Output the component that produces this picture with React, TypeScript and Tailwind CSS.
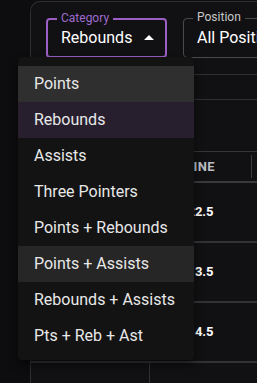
import React from "react";

const categories = [
  "Points",
  "Rebounds",
  "Assists",
  "Three Pointers",
  "Points + Rebounds",
  "Points + Assists",
  "Rebounds + Assists",
  "Pts + Reb + Ast",
];

const lines = ["22.5", "13.5", "14.5"];

function ArrowUp() {
  return (
    <svg viewBox="0 0 24 24" className="w-6 h-6 fill-white">
      <path d="m7 14 5-5 5 5z" />
    </svg>
  );
}

export default function App() {
  return (
    <div
      className="relative w-[257px] h-[383px] overflow-hidden bg-[#0d0d0f] text-white"
      style={{ fontFamily: "Roboto, 'Noto Sans', sans-serif" }}
    >
      {/* card */}
      <div className="ml-[30px] mt-[1px] w-[420px] h-[420px] border-l border-t border-[#2e2e31] rounded-tl-[10px] bg-[#111113]">
        {/* filters */}
        <div className="flex gap-4 pl-[15px] pt-[16px]">
          <div className="relative w-[121px] h-[40px] rounded-[4px] border-2 border-[#9c5fc4] flex items-center pl-[13px] pr-2">
            <span className="absolute -top-[9px] left-[9px] px-[4px] bg-[#111113] text-[12px] leading-[14px] text-[#9f6bcf]">
              Category
            </span>
            <span className="text-[16px]">Rebounds</span>
            <span className="ml-[5px] -mr-1">
              <ArrowUp />
            </span>
          </div>
          <div className="relative w-[160px] h-[40px] rounded-[4px] border border-[#4a4a4d] flex items-center pl-[13px]">
            <span className="absolute -top-[9px] left-[9px] px-[4px] bg-[#111113] text-[12px] leading-[14px] text-[#c8c8c8]">
              Position
            </span>
            <span className="text-[16px] whitespace-nowrap">All Positions</span>
          </div>
        </div>

        {/* toolbar strip */}
        <div className="mt-[16px] h-[26px] border-y border-[#2f2f32]" />

        {/* table */}
        <div className="mt-[51px]">
          <div className="flex h-[32px] border-t border-[#353538] border-b-2 border-b-[#3a3a3d] items-center">
            <div className="w-[119px]" />
            <div className="w-[101px] text-center text-[13px] font-bold tracking-wide text-[#b9bec6]">
              LINE
            </div>
            <div className="w-px h-[23px] bg-[#3c3c3f]" />
          </div>
          {lines.map((l) => (
            <div key={l} className="flex h-[60px] items-center border-b-2 border-[#333336]">
              <div className="w-[119px]" />
              <div className="w-[101px] text-center text-[13px] font-bold">{l}</div>
            </div>
          ))}
          <div className="flex h-[30px]">
            <div className="w-[119px] border-r border-[#333336]" />
          </div>
        </div>
      </div>

      {/* dropdown menu */}
      <div className="absolute left-[18px] top-[57px] w-[176px] h-[303px] rounded-[4px] bg-[#131313] py-[9px] shadow-[0_5px_10px_rgba(0,0,0,0.5)]">
        {categories.map((c) => (
          <div
            key={c}
            className={
              "h-[36px] flex items-center px-4 text-[16px] text-[#e8e8e8] " +
              (c === "Points"
                ? "bg-[#2f2f2f]"
                : c === "Rebounds"
                ? "bg-[#271f2e]"
                : c === "Points + Assists"
                ? "bg-[#262626]"
                : "")
            }
          >
            {c}
          </div>
        ))}
      </div>
    </div>
  );
}
